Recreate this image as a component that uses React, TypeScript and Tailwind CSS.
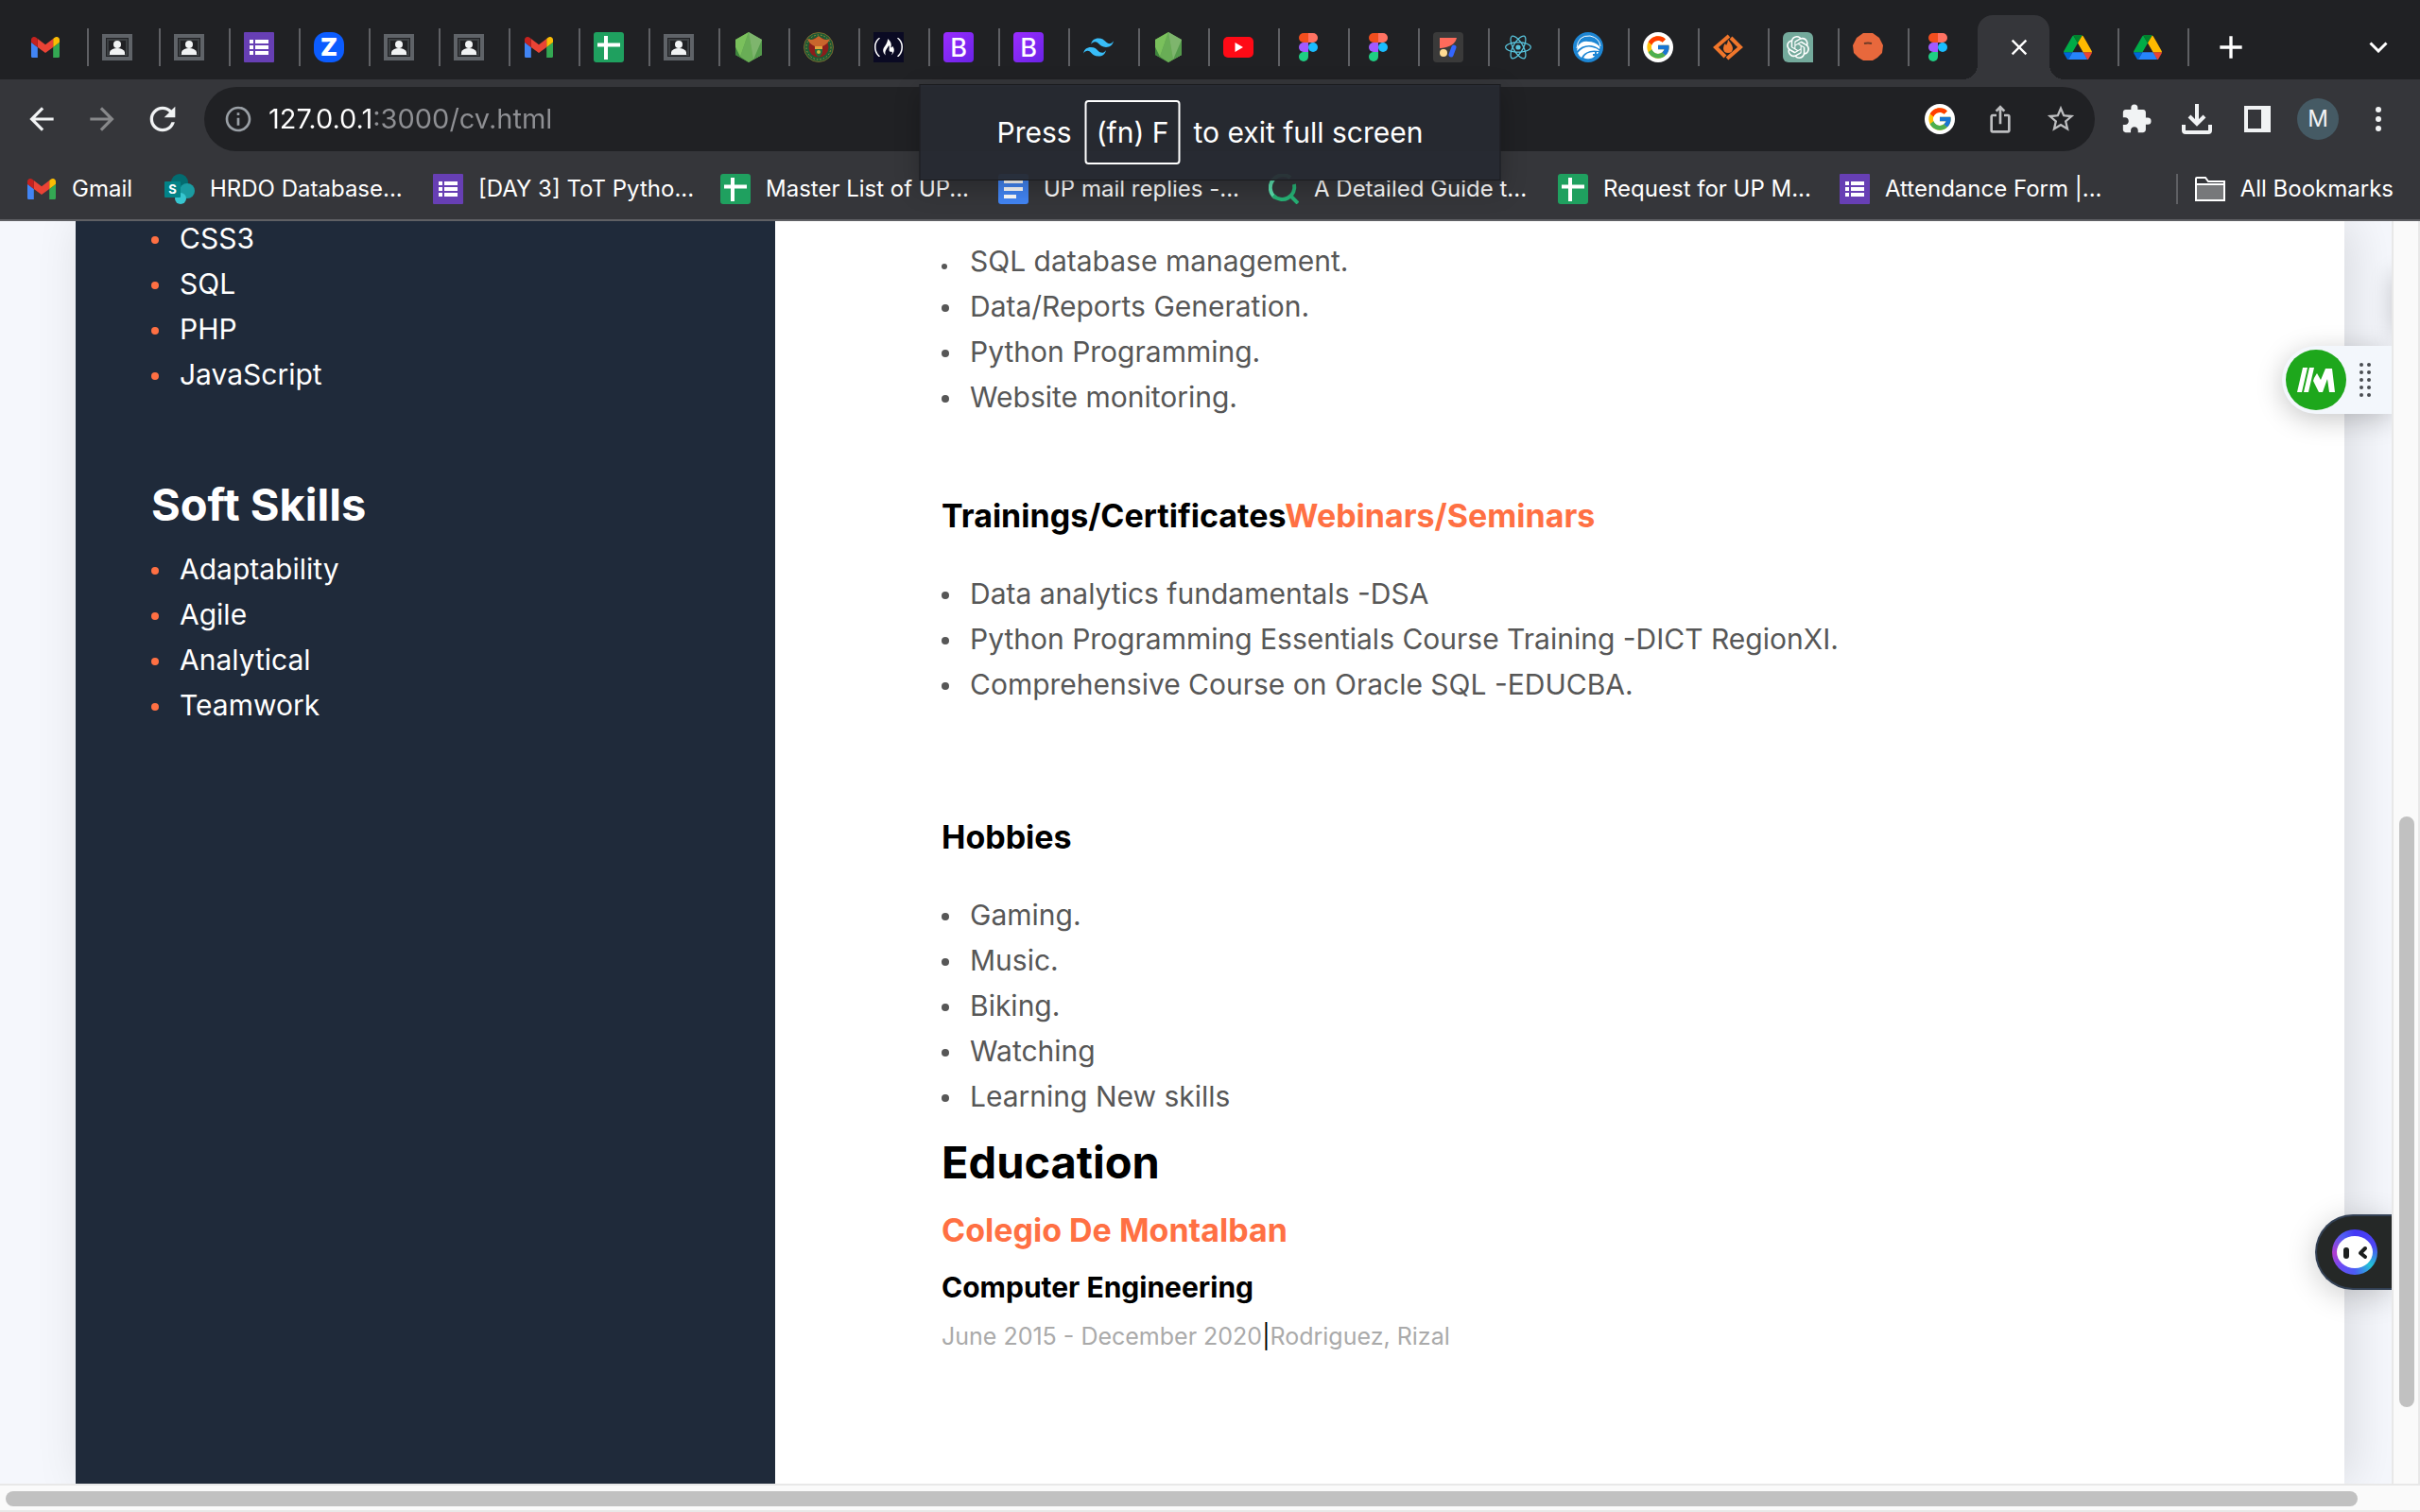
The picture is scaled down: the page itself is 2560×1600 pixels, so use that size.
import type { ReactNode } from "react";
import { FcGoogle } from "react-icons/fc";
import {
  MdAdd,
  MdArrowBack,
  MdArrowForward,
  MdClose,
  MdExtension,
  MdInfoOutline,
  MdIosShare,
  MdRefresh,
  MdStarBorder,
} from "react-icons/md";
import { SiFreecodecamp, SiOpenai, SiReact, SiTailwindcss } from "react-icons/si";

/* ---------- Favicons ---------- */

const Gmail = () => (
  <svg viewBox="52 42 88 66" className="w-[30px]">
    <path fill="#4285f4" d="M58 108h14V74L52 59v43c0 3.32 2.69 6 6 6" />
    <path fill="#34a853" d="M120 108h14c3.32 0 6-2.69 6-6V59l-20 15" />
    <path fill="#fbbc04" d="M120 48v26l20-15v-8c0-7.42-8.47-11.65-14.4-7.2" />
    <path fill="#ea4335" d="M72 74V48l24 18 24-18v26L96 92" />
    <path fill="#c5221f" d="M52 51v8l20 15V48l-5.6-4.2c-5.94-4.45-14.4-.22-14.4 7.2" />
  </svg>
);

const Contact = () => (
  <svg viewBox="0 0 32 32" className="size-8">
    <rect x="2" y="4" width="28" height="24" fill="#202124" stroke="#5f6368" strokeWidth="4" />
    <rect x="6" y="8" width="20" height="16" fill="none" stroke="#3c4043" strokeWidth="2" />
    <circle cx="16" cy="13" r="4" fill="#f1f3f4" />
    <path d="M8 24v-3q2-4 8-4t8 4v3z" fill="#f1f3f4" />
  </svg>
);

const Forms = () => (
  <svg viewBox="0 0 32 32" className="size-8">
    <rect width="32" height="32" rx="1" fill="#673fb4" />
    <path
      fill="#fff"
      d="M6 8h4v4H6zM12 8h14v4H12zM6 14h4v4H6zM12 14h14v4H12zM6 20h4v4H6zM12 20h14v4H12z"
    />
  </svg>
);

const Zoom = () => (
  <span className="flex size-8 items-center justify-center rounded-[13px] bg-[#0b5cff] text-[26px] leading-none font-black text-white">
    Z
  </span>
);

const Sheets = () => (
  <svg viewBox="0 0 32 32" className="size-8">
    <rect width="32" height="32" rx="3" fill="#1fa05f" />
    <path d="M13 4v25M4 13.500h24" stroke="#fff" strokeWidth="4" />
  </svg>
);

const Docs = () => (
  <svg viewBox="0 0 32 32" className="size-8">
    <rect width="32" height="32" rx="3" fill="#4285f4" />
    <path fill="#fff" d="M6 6h20v4H6zM6 14h20v4H6zM6 22h13v4H6z" />
  </svg>
);

const Node = () => (
  <svg viewBox="0 0 32 32" className="size-8">
    <path d="M16 0l14 8v16l-14 8L2 24V8z" fill="#5fa04e" />
    <path d="M16 0L2 8v8l5 10z" fill="#7ac05c" />
    <path d="M7 26l9-26 5 29-5 3z" fill="#69ad56" />
    <path d="M16 0l14 8v16l-9 5z" fill="#7eb56d" />
    <path d="M2 16l5 10 9 6-14-8z" fill="#3e863d" />
    <path d="M30 8v16l-9 5z" fill="#549a4b" />
  </svg>
);

const Seal = () => (
  <svg viewBox="0 0 32 32" className="size-8">
    <circle cx="16" cy="16" r="15.500" fill="#1d5a34" stroke="#7a6a2e" />
    <circle cx="16" cy="16" r="13" fill="none" stroke="#b08d35" strokeDasharray="1.500 2" />
    <circle cx="16" cy="16" r="10.500" fill="#8a1d1b" />
    <path d="M4 7q4 2 8 0l4-3 4 3q4 2 8 0-2 5-6 7l-2 1v3h-8v-3l-2-1q-4-2-6-7z" fill="#c9652c" />
    <path d="M12 15h8v6q-1 4-4 5-3-1-4-5z" fill="#1f6b3c" />
    <path d="M12 15h8v3h-8z" fill="#e0a03a" />
    <circle cx="16" cy="21" r="2" fill="#c9b037" />
  </svg>
);

const CodeCamp = () => (
  <span className="flex size-8 items-center justify-center bg-[#0a0a23]">
    <SiFreecodecamp className="size-[30px] text-white" />
  </span>
);

const Bootstrap = () => (
  <span className="flex size-8 items-center justify-center rounded bg-linear-to-br from-[#9a2bff] to-[#6a22e6] text-[27px] leading-none font-medium text-white">
    B
  </span>
);

const Tailwind = () => <SiTailwindcss className="size-8 text-[#38bdf8]" />;

const YouTube = () => (
  <svg viewBox="0 0 32 22" className="w-8">
    <rect width="32" height="22" rx="5" fill="#ff0a16" />
    <path d="M12.500 6v10l8.500-5z" fill="#fff" />
  </svg>
);

const Figma = () => (
  <svg viewBox="0 0 20 30" className="h-[30px]">
    <path d="M5 0h5v10H5A5 5 0 0 1 5 0z" fill="#f24e1e" />
    <path d="M10 0h5a5 5 0 0 1 0 10h-5z" fill="#ff7262" />
    <path d="M5 10h5v10H5a5 5 0 0 1 0-10z" fill="#a259ff" />
    <circle cx="15" cy="15" r="5" fill="#1abcfe" />
    <path d="M5 20h5v5a5 5 0 1 1-5-5z" fill="#1fce83" />
  </svg>
);

const Shapes = () => (
  <svg viewBox="0 0 32 32" className="size-8">
    <rect width="32" height="32" rx="4" fill="#3a3a3a" />
    <path d="M7 6h18q-2 10-18 11z" fill="#ff6b5b" />
    <circle cx="11" cy="22" r="4" fill="#ffdc93" />
    <path d="M22 16l-3 8" stroke="#3366ff" strokeWidth="5" strokeLinecap="round" />
  </svg>
);

const ReactLogo = () => <SiReact className="size-7 text-[#58c4dc]" />;

const Globe = () => (
  <svg viewBox="0 0 32 32" className="size-8">
    <circle cx="16" cy="16" r="16" fill="#1d86d4" />
    <path d="M4 17Q5 3 18 4q10 2 11 11" fill="none" stroke="#fff" strokeWidth="1" />
    <path d="M5 15Q9 9 16 10q7 0 12 5 1 2 0 3-5-4-11-4Q9 14 4 20z" fill="#fff" />
    <path d="M5 22q7-8 15-6 6 1 8 4-6-1-10 0-7 2-9 7-3-2-4-5z" fill="#fff" />
    <path d="M11 27q3-6 11-6h5q-1 3-4 3 0 3-5 4-4 1-7-1z" fill="#fff" />
    <path d="M24 20v7M21 24h6" fill="none" stroke="#1d86d4" strokeWidth="2" />
  </svg>
);

const Google = () => (
  <span className="flex size-8 items-center justify-center rounded-full bg-white">
    <FcGoogle className="size-7" />
  </span>
);

const Flame = () => (
  <svg viewBox="0 0 32 32" className="size-8">
    <path
      d="M17 4L3 16l10 10M15 28l14-12L19 6"
      fill="none"
      stroke="#f0762b"
      strokeWidth="4"
    />
    <path d="M16 8q5 6 5 9 0 5-5 5t-5-5q0-3 2-5l1 2q2-3 2-6z" fill="#f0762b" />
  </svg>
);

const ChatGpt = () => (
  <span className="flex size-8 items-center justify-center rounded-md rounded-br-none bg-[#74aa9c]">
    <SiOpenai className="size-6 text-white" />
  </span>
);

const Ember = () => (
  <svg viewBox="0 0 32 32" className="size-8">
    <path d="M11 1h10l7 5 4 8-1 8-5 5-5 3H11l-5-3-5-5-1-8 4-8z" fill="#e8683c" />
    <path d="M12 12q4-1 8 0" fill="none" stroke="#6f3a26" strokeWidth="2" />
  </svg>
);

const Drive = () => (
  <svg viewBox="0 0 87.300 78" className="w-[30px]">
    <path fill="#0066da" d="m6.600 66.850 3.850 6.650c.8 1.400 1.950 2.500 3.300 3.300l13.750-23.800h-27.500c0 1.550.4 3.100 1.200 4.500z" />
    <path fill="#00ac47" d="m43.650 25-13.750-23.800c-1.350.8-2.500 1.900-3.300 3.300l-25.400 44a9.060 9.060 0 0 0 -1.200 4.500h27.500z" />
    <path fill="#ea4335" d="m73.550 76.800c1.350-.8 2.500-1.900 3.300-3.300l1.600-2.750 7.650-13.250c.8-1.400 1.200-2.950 1.200-4.500h-27.500l5.850 11.500z" />
    <path fill="#00832d" d="m43.650 25 13.750-23.800c-1.350-.8-2.900-1.200-4.500-1.200h-18.500c-1.600 0-3.150.45-4.500 1.200z" />
    <path fill="#2684fc" d="m59.800 53h-32.300l-13.750 23.800c1.350.8 2.900 1.200 4.500 1.200h50.800c1.600 0 3.150-.45 4.500-1.200z" />
    <path fill="#ffba00" d="m73.400 26.500-12.700-22c-.8-1.400-1.950-2.500-3.300-3.300l-13.750 23.800 16.150 28h27.450c0-1.550-.4-3.100-1.200-4.500z" />
  </svg>
);

const SharePoint = () => (
  <svg viewBox="0 0 32 32" className="size-8">
    <circle cx="16" cy="9" r="9" fill="#036c70" />
    <circle cx="24" cy="18" r="8" fill="#1a9ba1" />
    <circle cx="17" cy="26" r="6" fill="#37c6d0" />
    <rect y="8" width="17" height="17" rx="1" fill="#038387" />
    <text x="8.500" y="21" textAnchor="middle" fontSize="13" fontWeight="700" fill="#fff">
      S
    </text>
  </svg>
);

const Search = () => (
  <svg viewBox="0 0 32 32" className="size-8">
    <path d="M7 25A13 13 0 0 1 23 4" fill="none" stroke="#5be0ae" strokeWidth="4" />
    <path d="M5 23a13 13 0 0 0 22-12" fill="none" stroke="#27b376" strokeWidth="4" />
    <path d="M23 23l8 8" stroke="#27b376" strokeWidth="4" />
  </svg>
);

/* ---------- Tab strip ---------- */

const tabs: [string, () => ReactNode][] = [
  ["Inbox", Gmail],
  ["Classroom", Contact],
  ["Classroom", Contact],
  ["Form", Forms],
  ["Meeting", Zoom],
  ["Classroom", Contact],
  ["Classroom", Contact],
  ["Inbox", Gmail],
  ["Spreadsheet", Sheets],
  ["Classroom", Contact],
  ["Node.js", Node],
  ["University", Seal],
  ["freeCodeCamp", CodeCamp],
  ["Bootstrap", Bootstrap],
  ["Bootstrap", Bootstrap],
  ["Tailwind CSS", Tailwind],
  ["Node.js", Node],
  ["YouTube", YouTube],
  ["Figma", Figma],
  ["Figma", Figma],
  ["Shapes", Shapes],
  ["React", ReactLogo],
  ["Globe", Globe],
  ["Google", Google],
  ["Flame", Flame],
  ["ChatGPT", ChatGpt],
  ["Ember", Ember],
  ["Figma", Figma],
];

function Tab({ label, Icon, wide, last }: { label: string; Icon: () => ReactNode; wide?: boolean; last?: boolean }) {
  return (
    <button
      aria-label={label}
      className={`flex h-10 shrink-0 items-center pl-[14px] ${wide ? "w-[76px]" : last ? "w-[72px]" : "w-[74px]"} ${
        last ? "" : "border-r-2 border-[#5f6064]"
      }`}
    >
      <span className="flex size-8 items-center justify-center">
        <Icon />
      </span>
    </button>
  );
}

function TabStrip() {
  return (
    <div className="flex h-[84px] items-end bg-[#202124] pl-[18px]">
      <div className="flex h-[68px] items-center">
        {tabs.map(([label, Icon], i) => (
          <Tab key={i} label={label} Icon={Icon} wide={i < 2} last={i === tabs.length - 1} />
        ))}
      </div>
      <div className="relative flex h-[68px] w-[76px] shrink-0 items-center justify-center rounded-t-2xl bg-[#35363a] pl-3">
        <span className="absolute bottom-0 -left-4 size-4 bg-[radial-gradient(circle_at_0_0,transparent_16px,#35363a_16px)]" />
        <span className="absolute -right-4 bottom-0 size-4 bg-[radial-gradient(circle_at_100%_0,transparent_16px,#35363a_16px)]" />
        <button aria-label="Close tab">
          <MdClose className="size-7 text-white" />
        </button>
      </div>
      <div className="flex h-[68px] items-center">
        <Tab label="Drive" Icon={Drive} />
        <Tab label="Drive" Icon={Drive} />
        <button aria-label="New tab" className="ml-6 flex size-10 items-center justify-center">
          <MdAdd className="size-10 text-white" />
        </button>
      </div>
      <button aria-label="Search tabs" className="mr-7 ml-auto flex h-[68px] w-8 items-center justify-center">
        <svg viewBox="0 0 20 12" className="w-5">
          <path d="M1.500 1.500L10 10l8.500-8.500" fill="none" stroke="#fff" strokeWidth="3" />
        </svg>
      </button>
    </div>
  );
}

/* ---------- Toolbar ---------- */

function ToolButton({ label, children }: { label: string; children: ReactNode }) {
  return (
    <button aria-label={label} className="flex h-16 w-16 shrink-0 items-center justify-center">
      {children}
    </button>
  );
}

function Toolbar() {
  return (
    <div className="flex h-[84px] items-center bg-[#35363a] px-3 text-[#f1f3f4]">
      <ToolButton label="Back">
        <MdArrowBack className="size-[38px]" />
      </ToolButton>
      <ToolButton label="Forward">
        <MdArrowForward className="size-[38px] text-[#87888a]" />
      </ToolButton>
      <ToolButton label="Reload">
        <MdRefresh className="size-10" />
      </ToolButton>
      <div className="mx-3 flex h-[68px] min-w-0 flex-1 items-center rounded-full bg-[#202124] pr-1 pl-5 text-[#bdbec0]">
        <MdInfoOutline className="size-8 shrink-0 text-[#9aa0a6]" />
        <input
          aria-label="Address"
          defaultValue="127.0.0.1:3000/cv.html"
          className="mx-4 min-w-0 flex-1 bg-[linear-gradient(to_right,#ffffff_112px,#8f9094_112px)] bg-clip-text text-[29px] text-transparent outline-none"
        />
        <ToolButton label="Search with Google">
          <Google />
        </ToolButton>
        <ToolButton label="Share">
          <MdIosShare className="size-8" />
        </ToolButton>
        <ToolButton label="Bookmark this page">
          <MdStarBorder className="size-[34px]" />
        </ToolButton>
      </div>
      <ToolButton label="Extensions">
        <MdExtension className="size-[34px]" />
      </ToolButton>
      <ToolButton label="Downloads">
        <svg viewBox="0 0 32 32" className="size-8" fill="none" stroke="currentColor" strokeWidth="4">
          <path d="M16 0v20M8 13l8 8 8-8" />
          <path d="M2 22v6q0 2 2 2h24q2 0 2-2v-6" />
        </svg>
      </ToolButton>
      <ToolButton label="Side panel">
        <svg viewBox="0 0 28 28" className="size-7">
          <path d="M0 0h28v28H0zM4 4v20h14V4z" fill="currentColor" fillRule="evenodd" />
        </svg>
      </ToolButton>
      <ToolButton label="Profile">
        <span className="flex size-11 items-center justify-center rounded-full bg-[#455a64] text-2xl">M</span>
      </ToolButton>
      <ToolButton label="Menu">
        <span className="flex flex-col gap-1">
          <span className="size-[6px] rounded-full bg-current" />
          <span className="size-[6px] rounded-full bg-current" />
          <span className="size-[6px] rounded-full bg-current" />
        </span>
      </ToolButton>
    </div>
  );
}

/* ---------- Bookmarks ---------- */

const bookmarks: [string, () => ReactNode, string][] = [
  ["Gmail", Gmail, "w-[146px]"],
  ["HRDO Database...", SharePoint, "w-[284px]"],
  ["[DAY 3] ToT Pytho...", Forms, "w-[304px]"],
  ["Master List of UP...", Sheets, "w-[294px]"],
  ["UP mail replies -...", Docs, "w-[286px]"],
  ["A Detailed Guide t...", Search, "w-[306px]"],
  ["Request for UP M...", Sheets, "w-[298px]"],
  ["Attendance Form |...", Forms, "w-[290px]"],
];

function BookmarksBar() {
  return (
    <nav className="flex h-[66px] items-center border-b-2 border-[#5f6064] bg-[#35363a] pr-7 pl-7 text-2xl text-white">
      {bookmarks.map(([label, Icon, width]) => (
        <a key={label} href="#" className={`flex shrink-0 items-center gap-4 whitespace-nowrap ${width}`}>
          <span className="flex size-8 shrink-0 items-center justify-center">
            <Icon />
          </span>
          {label}
        </a>
      ))}
      <button className="ml-auto flex h-8 items-center gap-4 border-l-2 border-[#5f6064] pl-[18px] whitespace-nowrap">
        <svg viewBox="0 0 32 26" className="w-8">
          <path d="M1 25V2q0-1 1-1h9l3 4h17v20z" fill="#35363a" stroke="#fff" strokeWidth="2" />
          <path d="M2 9h28v15H2z" fill="#77787a" />
          <path d="M1 8h30" stroke="#fff" strokeWidth="2" />
        </svg>
        All Bookmarks
      </button>
    </nav>
  );
}

function FullscreenHint() {
  return (
    <div className="absolute top-[89px] left-1/2 flex h-[102px] w-[615px] -translate-x-1/2 items-center justify-center gap-[14px] border border-[#1a1b1e] bg-[#272a31]/95 text-[30px] whitespace-nowrap text-white shadow-[0_8px_24px_rgba(0,0,0,0.25)]">
      <span>Press</span>
      <kbd className="flex h-[68px] items-center rounded border-2 border-white px-[10px] font-[Inter,sans-serif]">(fn) F</kbd>
      <span>to exit full screen</span>
    </div>
  );
}

/* ---------- Resume ---------- */

function BulletList({ items, bullet }: { items: string[]; bullet: string }) {
  return (
    <ul className="text-[30px] leading-[48px]">
      {items.map((item) => (
        <li key={item} className="flex items-center gap-[22px]">
          <span className={`mt-1 size-2 shrink-0 rounded-full ${bullet}`} />
          {item}
        </li>
      ))}
    </ul>
  );
}

function Sidebar() {
  return (
    <aside className="w-[740px] shrink-0 overflow-hidden bg-[#1f2a3a] px-20 text-white">
      <div className="-mt-[6px]">
        <BulletList bullet="bg-[#ff7043]" items={["CSS3", "SQL", "PHP", "JavaScript"]} />
      </div>
      <h2 className="mt-[86px] mb-4 text-[47px] leading-[56px] font-bold">Soft Skills</h2>
      <BulletList bullet="bg-[#ff7043]" items={["Adaptability", "Agile", "Analytical", "Teamwork"]} />
    </aside>
  );
}

function Main() {
  return (
    <main className="min-w-0 flex-1 bg-white pt-[18px] pl-44 text-[#575757]">
      <p className="flex items-center gap-6 text-[30px] leading-[48px]">
        <span className="mt-3 size-[6px] shrink-0 rounded-full bg-[#575757]" />
        SQL database management.
      </p>
      <BulletList
        bullet="bg-[#575757]"
        items={["Data/Reports Generation.", "Python Programming.", "Website monitoring."]}
      />
      <h3 className="mt-[78px] mb-[34px] text-[34px] leading-[48px] font-bold text-black">
        Trainings/Certificates<span className="text-[#ff7043]">Webinars/Seminars</span>
      </h3>
      <BulletList
        bullet="bg-[#575757]"
        items={[
          "Data analytics fundamentals -DSA",
          "Python Programming Essentials Course Training -DICT RegionXI.",
          "Comprehensive Course on Oracle SQL -EDUCBA.",
        ]}
      />
      <h3 className="mt-[114px] mb-[34px] text-[34px] leading-[48px] font-bold text-black">Hobbies</h3>
      <BulletList bullet="bg-[#575757]" items={["Gaming.", "Music.", "Biking.", "Watching", "Learning New skills"]} />
      <h2 className="mt-[14px] text-[47px] leading-[64px] font-bold text-black">Education</h2>
      <h3 className="mt-4 text-[34px] leading-[48px] font-bold text-[#ff7043]">Colegio De Montalban</h3>
      <h4 className="mt-4 text-[30px] leading-[40px] font-bold text-black">Computer Engineering</h4>
      <p className="mt-[14px] text-[25px] leading-[36px] text-[#aaaaaa]">
        June 2015 - December 2020<span className="text-black">|</span>Rodriguez, Rizal
      </p>
    </main>
  );
}

function MailDock() {
  return (
    <div className="absolute top-[132px] right-0 flex h-[72px] w-[116px] items-center gap-[14px] rounded-l-full bg-[#f3f7fc] pl-1 shadow-[0_6px_28px_rgba(0,0,0,0.22)]">
      <button aria-label="Open extension" className="flex size-16 items-center justify-center rounded-full bg-[#1ea71c]">
        <svg viewBox="0 0 40 28" className="w-10" fill="#fff">
          <path d="M6 1h5L5 27H0zM13 1h5l-6 26H7z" />
          <path d="M18 12l3-5 4 7 5-12h7l3 25h-6l-2-14-5 14h-4l-6-12z" />
        </svg>
      </button>
      <span className="grid grid-cols-2 gap-1">
        {Array.from({ length: 10 }, (_, i) => (
          <span key={i} className="size-1 rounded-full bg-[#4a4d52]" />
        ))}
      </span>
    </div>
  );
}

function AssistantDock() {
  return (
    <button
      aria-label="Open assistant"
      className="absolute right-0 bottom-[205px] flex h-20 w-[81px] items-center rounded-l-full border-2 border-r-0 border-[#334155] bg-[#252827] pl-4 shadow-[0_6px_32px_rgba(0,0,0,0.2)]"
    >
      <span className="flex size-12 items-center justify-center rounded-full bg-[conic-gradient(#4338f5,#4f46f5_20%,#22c3d6_36%,#4b5cf5_50%,#6a4cf5_62%,#b13cd0_74%,#4f5ff5_90%,#4338f5)]">
        <svg viewBox="0 0 38 34" className="w-[38px]">
          <ellipse cx="19" cy="17" rx="19" ry="17" fill="#fff" />
          <rect x="7" y="12" width="6" height="12" rx="3" fill="#1c1f1e" />
          <path d="M30 13l-5 5 5 4" fill="none" stroke="#1c1f1e" strokeWidth="4" strokeLinecap="round" strokeLinejoin="round" />
        </svg>
      </span>
    </button>
  );
}

export default function App() {
  return (
    <div className="relative flex h-screen flex-col overflow-hidden font-[Inter,sans-serif]">
      <header className="shrink-0">
        <TabStrip />
        <Toolbar />
        <BookmarksBar />
      </header>
      <FullscreenHint />
      <div className="flex min-h-0 flex-1">
        <div className="relative flex min-w-0 flex-1 overflow-hidden bg-[#f5f7fc] pr-[50px] pl-20">
          <div className="flex min-w-0 flex-1 shadow-[8px_0_48px_rgba(0,0,0,0.12)]">
            <Sidebar />
            <Main />
          </div>
          <div className="absolute top-14 -right-10 h-16 w-10 shadow-[0_0_24px_rgba(0,0,0,0.2)]" />
          <MailDock />
          <AssistantDock />
        </div>
        <div className="flex w-[30px] shrink-0 flex-col border-x-2 border-[#e8e8e8] bg-[#fafafa] pl-[6px]">
          <div className="mt-[630px] h-[625px] w-4 rounded-full bg-[#c1c1c1]" />
        </div>
      </div>
      <div className="h-[30px] shrink-0 border-y-2 border-[#e8e8e8] bg-[#fafafa] pt-[6px] pr-[66px] pl-[6px]">
        <div className="h-4 rounded-full bg-[#c1c1c1]" />
      </div>
    </div>
  );
}
